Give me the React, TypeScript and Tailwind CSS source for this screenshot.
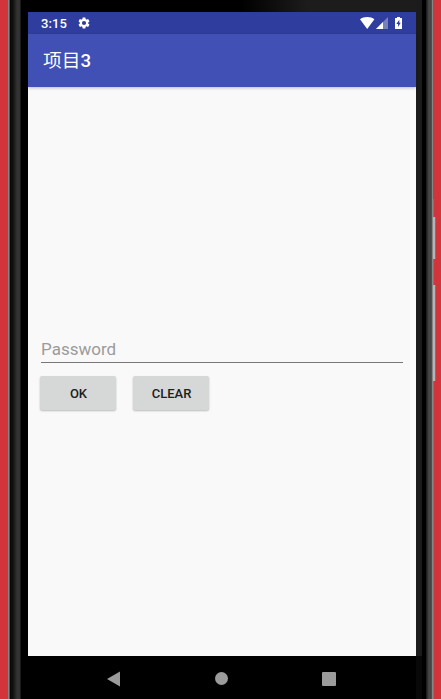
import React from 'react';

function StatusBar() {
  return (
    <div className="flex h-[22px] items-center bg-[#2f3e9e] text-white">
      <span className="ml-[13px] w-[27px] text-[13px] leading-none tracking-[0.1px] font-medium">3:15</span>
      <svg className="ml-[9px]" width="14" height="14" viewBox="0 0 24 24" fill="white">
        <path d="M19.14 12.94c.04-.3.06-.61.06-.94 0-.32-.02-.64-.07-.94l2.03-1.58a.49.49 0 0 0 .12-.61l-1.92-3.32a.488.488 0 0 0-.59-.22l-2.39.96c-.5-.38-1.03-.7-1.62-.94l-.36-2.54a.484.484 0 0 0-.48-.41h-3.84c-.24 0-.43.17-.47.41l-.36 2.54c-.59.24-1.13.57-1.62.94l-2.39-.96c-.22-.08-.47 0-.59.22L2.74 8.87c-.12.21-.08.47.12.61l2.03 1.58c-.05.3-.09.63-.09.94s.02.64.07.94l-2.03 1.58a.49.49 0 0 0-.12.61l1.92 3.32c.12.22.37.29.59.22l2.39-.96c.5.38 1.03.7 1.62.94l.36 2.54c.05.24.24.41.48.41h3.84c.24 0 .44-.17.47-.41l.36-2.54c.59-.24 1.13-.56 1.62-.94l2.39.96c.22.08.47 0 .59-.22l1.92-3.32c.12-.22.07-.47-.12-.61zM12 15.6A3.6 3.6 0 1 1 12 8.400a3.600 3.600 0 0 1 0 7.200z" />
      </svg>
      <div className="ml-auto mr-[14px] flex items-center">
        <svg width="15" height="12" viewBox="0 0 15 12"><path d="M7.200 11.900L0 2.200C3.500 -0.600 10.900 -0.600 14.400 2.200Z" fill="white" /></svg>
        <svg className="ml-px" width="12" height="12" viewBox="0 0 12 12">
          <path d="M0 12L12 0V12Z" fill="#7781bd" />
          <path d="M0 12L7 5V12Z" fill="white" />
        </svg>
        <svg className="ml-[7px]" width="7" height="12" viewBox="0 0 7 12">
          <path d="M2 0H5V1H7V12H0V1H2Z" fill="white" />
          <path d="M4.300 2.800L1.300 7H3.100V10L5.700 5.800H4.300Z" fill="#2f3e9e" />
        </svg>
      </div>
    </div>
  );
}

function NavigationBar() {
  return (
    <div className="flex h-[43px] items-center bg-black pb-px pl-[79px]">
      <svg className="mt-[3px]" width="13" height="16" viewBox="0 0 13 16"><path d="M13 0.500V15.500L0 8Z" fill="#9b9b9b" /></svg>
      <div className="ml-[95px] mt-[3px] size-[13px] rounded-full bg-[#9b9b9b]" />
      <div className="ml-[94px] mt-[3px] size-[14px] rounded-[1px] bg-[#9b9b9b]" />
    </div>
  );
}

const button =
  'h-[34px] w-[76px] rounded-[2px] bg-[#d6d8d7] pl-px text-[13px] leading-none font-medium text-[#202020] shadow-[0_1px_2px_rgba(0,0,0,0.25)]';

export default function App() {
  return (
    <div className="flex h-[699px] w-[441px] overflow-hidden bg-[#d1343b] font-['Roboto','Noto_Sans_CJK_SC',sans-serif]">
      <div className="w-[8px] shrink-0" />
      <div className="w-[2px] shrink-0 bg-[linear-gradient(90deg,#858585_50%,#555_50%)]" />
      <div className="w-[11px] shrink-0 bg-[linear-gradient(90deg,#080808_0%,#101010_25%,#333_65%,#333_85%,#111_100%)]" />
      <div className="w-[7px] shrink-0 bg-black" />
      <div className="flex w-[388px] shrink-0 flex-col">
        <div className="h-[12px] bg-[linear-gradient(90deg,#000_55%,#1c1c1c_72%)]" />
        <StatusBar />
        <header className="z-10 flex h-[53px] items-center bg-[#4050b5] pl-[15px] pt-[2px] text-[18.7px] font-medium text-white shadow-[0_1px_3px_rgba(0,0,0,0.25)]">
          <h1 className="leading-none"><span className="font-normal">项目</span>3</h1>
        </header>
        <main className="h-[569px] bg-[#f9f9f9] pl-[13px] pt-[250px]">
          <input
            type="password"
            placeholder="Password"
            className="block h-[26px] w-[362px] border-b border-[#777] bg-transparent pb-[2px] text-[17px] outline-none placeholder:text-[#9b9b9b]"
          />
          <div className="-ml-px mt-[13px] flex gap-[17px]">
            <button className={button}>OK</button>
            <button className={button}>CLEAR</button>
          </div>
        </main>
        <NavigationBar />
      </div>
      <div className="w-[6px] shrink-0 bg-[linear-gradient(180deg,#1b1b1b_656px,#080808_656px)]" />
      <div className="w-[4px] shrink-0 bg-black" />
      <div className="w-[6px] shrink-0 bg-[linear-gradient(90deg,#151515_0%,#4a4a4a_50%,#444_75%,#555_100%)]" />
      <div className="w-px shrink-0 bg-[#858585]" />
      <div className="flex w-[3px] shrink-0 flex-col">
        <div className="mt-[199px] h-[18px] w-px bg-[#777]" />
        <div className="h-[42px] border-r border-[#777] bg-[#b5b5b5]" />
        <div className="h-[26px] w-px bg-[#777]" />
        <div className="h-[96px] border-r border-[#777] bg-[#b5b5b5]" />
        <div className="w-px flex-1 bg-[#777]" />
      </div>
    </div>
  );
}
